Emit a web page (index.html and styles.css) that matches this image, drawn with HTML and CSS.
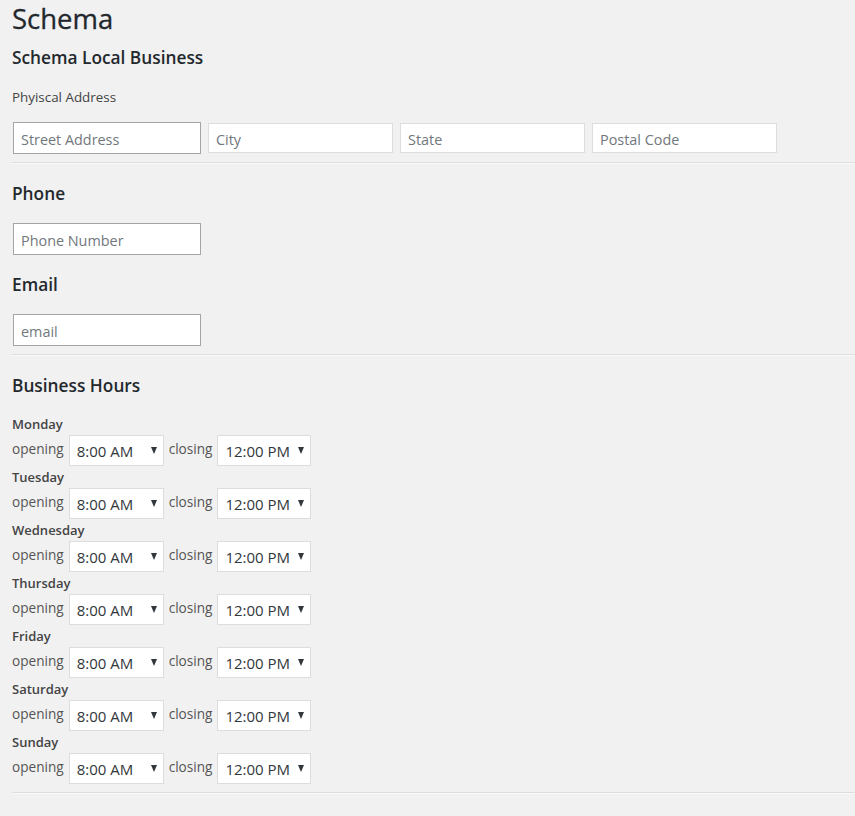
FILE: index.html
```html
<!DOCTYPE html>
<html lang="en">
<head>
<meta charset="utf-8">
<title>Schema</title>
<link rel="stylesheet" href="styles.css">
</head>
<body>
<div class="wrap">
  <h1 class="page-title">Schema</h1>
  <h2 class="section-title first">Schema Local Business</h2>
  <p class="field-label">Phyiscal Address</p>
  <div class="address-row">
    <input class="text-input strong" type="text" placeholder="Street Address">
    <input class="text-input light" type="text" placeholder="City">
    <input class="text-input light" type="text" placeholder="State">
    <input class="text-input light" type="text" placeholder="Postal Code">
  </div>
  <hr class="divider">

  <h2 class="section-title">Phone</h2>
  <input class="text-input strong single" type="text" placeholder="Phone Number">
  <h2 class="section-title">Email</h2>
  <input class="text-input strong single" type="text" placeholder="email">
  <hr class="divider">

  <h2 class="section-title">Business Hours</h2>
  <div class="hours">
    <div class="day">
      <div class="day-name">Monday</div>
      <div class="day-row">
        <span class="hour-label">opening</span>
        <span class="select-wrap"><select class="time-select"><option>8:00 AM</option></select></span>
        <span class="hour-label">closing</span>
        <span class="select-wrap wide"><select class="time-select"><option>12:00 PM</option></select></span>
      </div>
    </div>
    <div class="day">
      <div class="day-name">Tuesday</div>
      <div class="day-row">
        <span class="hour-label">opening</span>
        <span class="select-wrap"><select class="time-select"><option>8:00 AM</option></select></span>
        <span class="hour-label">closing</span>
        <span class="select-wrap wide"><select class="time-select"><option>12:00 PM</option></select></span>
      </div>
    </div>
    <div class="day">
      <div class="day-name">Wednesday</div>
      <div class="day-row">
        <span class="hour-label">opening</span>
        <span class="select-wrap"><select class="time-select"><option>8:00 AM</option></select></span>
        <span class="hour-label">closing</span>
        <span class="select-wrap wide"><select class="time-select"><option>12:00 PM</option></select></span>
      </div>
    </div>
    <div class="day">
      <div class="day-name">Thursday</div>
      <div class="day-row">
        <span class="hour-label">opening</span>
        <span class="select-wrap"><select class="time-select"><option>8:00 AM</option></select></span>
        <span class="hour-label">closing</span>
        <span class="select-wrap wide"><select class="time-select"><option>12:00 PM</option></select></span>
      </div>
    </div>
    <div class="day">
      <div class="day-name">Friday</div>
      <div class="day-row">
        <span class="hour-label">opening</span>
        <span class="select-wrap"><select class="time-select"><option>8:00 AM</option></select></span>
        <span class="hour-label">closing</span>
        <span class="select-wrap wide"><select class="time-select"><option>12:00 PM</option></select></span>
      </div>
    </div>
    <div class="day">
      <div class="day-name">Saturday</div>
      <div class="day-row">
        <span class="hour-label">opening</span>
        <span class="select-wrap"><select class="time-select"><option>8:00 AM</option></select></span>
        <span class="hour-label">closing</span>
        <span class="select-wrap wide"><select class="time-select"><option>12:00 PM</option></select></span>
      </div>
    </div>
    <div class="day">
      <div class="day-name">Sunday</div>
      <div class="day-row">
        <span class="hour-label">opening</span>
        <span class="select-wrap"><select class="time-select"><option>8:00 AM</option></select></span>
        <span class="hour-label">closing</span>
        <span class="select-wrap wide"><select class="time-select"><option>12:00 PM</option></select></span>
      </div>
    </div>
  </div>
  <hr class="divider">
</div>
</body>
</html>
```

FILE: styles.css
```css
html, body {
  margin: 0;
  padding: 0;
  background: #f1f1f1;
}

body {
  font-family: "Open Sans", "Noto Sans", sans-serif;
  color: #444;
  font-size: 13px;
}

.wrap {
  padding-left: 12px;
}

.page-title {
  margin: 0;
  font-size: 27.5px;
  line-height: 38px;
  font-weight: 400;
  color: #23282d;
  -webkit-text-stroke: 0.3px #23282d;
}

.section-title {
  margin: 17px 0 0;
  padding-top: 2px;
  font-size: 17.3px;
  line-height: 22px;
  font-weight: 600;
  color: #23282d;
}

.section-title.first {
  margin-top: 7px;
}

.field-label {
  margin: 19px 0 0;
  font-size: 13.4px;
  line-height: 18px;
  color: #444;
}

.address-row {
  display: flex;
  align-items: center;
  gap: 7px;
  margin-top: 16px;
  height: 32px;
}

.text-input {
  box-sizing: border-box;
  margin: 0;
  background: #fff;
  font-family: inherit;
  font-size: 14.4px;
  color: #32373c;
  padding: 2px 7px 0;
  outline: none;
  border-radius: 0;
}

.text-input::placeholder {
  color: #72777c;
}

.text-input.strong {
  width: 188px;
  height: 32px;
  border: 1px solid #a5a5a5;
}

.text-input.light {
  width: 185px;
  height: 30px;
  border: 1px solid #ddd;
}

.text-input.single {
  display: block;
  margin-top: 18px;
  margin-left: 1px;
}

.address-row .text-input.strong {
  margin-left: 1px;
}

.divider {
  margin: 8px 0 0;
  height: 0;
  border: 0;
  border-top: 1px solid #ddd;
  border-bottom: 1px solid #fafafa;
}

.hours {
  margin-top: 18px;
}

.day + .day {
  margin-top: 2px;
}

.day-name {
  font-size: 13px;
  line-height: 18px;
  font-weight: 600;
  color: #444;
}

.day-row {
  display: flex;
  align-items: center;
  gap: 5px;
  margin-top: 2px;
  height: 31px;
}

.hour-label {
  font-size: 13.6px;
  line-height: 18px;
  color: #555;
  padding-bottom: 3px;
}

.select-wrap {
  position: relative;
  display: block;
  width: 95px;
  height: 31px;
}

.select-wrap.wide {
  width: 94px;
}

.select-wrap::after {
  content: "";
  position: absolute;
  right: 7px;
  top: 12px;
  width: 0;
  height: 0;
  border-left: 3.5px solid transparent;
  border-right: 3.5px solid transparent;
  border-top: 7px solid #32373c;
  pointer-events: none;
}

.time-select {
  appearance: none;
  -webkit-appearance: none;
  box-sizing: border-box;
  width: 100%;
  height: 31px;
  margin: 0;
  padding: 0 0 0 7px;
  border: 1px solid #ddd;
  border-radius: 0;
  background: #fff;
  font-family: inherit;
  font-size: 15px;
  color: #32373c;
  outline: none;
}
```
